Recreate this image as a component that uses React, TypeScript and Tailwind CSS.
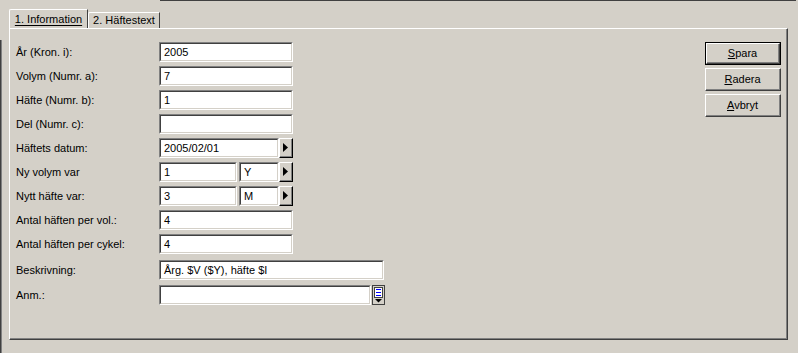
import type { ReactNode } from 'react'

const rows: { label: string; kind: 'text' | 'date' | 'period' | 'wide' | 'memo'; value?: string; unit?: string }[] = [
  { label: 'År (Kron. i):', kind: 'text', value: '2005' },
  { label: 'Volym (Numr. a):', kind: 'text', value: '7' },
  { label: 'Häfte (Numr. b):', kind: 'text', value: '1' },
  { label: 'Del (Numr. c):', kind: 'text', value: '' },
  { label: 'Häftets datum:', kind: 'date', value: '2005/02/01' },
  { label: 'Ny volym var', kind: 'period', value: '1', unit: 'Y' },
  { label: 'Nytt häfte var:', kind: 'period', value: '3', unit: 'M' },
  { label: 'Antal häften per vol.:', kind: 'text', value: '4' },
  { label: 'Antal häften per cykel:', kind: 'text', value: '4' },
  { label: 'Beskrivning:', kind: 'wide', value: 'Årg. $V ($Y), häfte $I' },
  { label: 'Anm.:', kind: 'memo', value: '' },
]

function Field({ value, className }: { value?: string; className: string }) {
  return (
    <div className={`h-[20px] border-t border-l border-t-[#808080] border-l-[#808080] border-b border-r border-b-white border-r-white ${className}`}>
      <div className="flex h-full items-center border-t border-l border-t-[#404040] border-l-[#404040] border-b border-r border-b-[#d4d0c8] border-r-[#d4d0c8] bg-white pl-[3px] pt-[1px]">
        {value}
      </div>
    </div>
  )
}

function ArrowBtn() {
  return (
    <div className="h-[20px] w-[14px] border-r border-b border-r-black border-b-black border-t border-l border-t-white border-l-white">
      <div className="flex h-full items-center justify-center border-r border-b border-r-[#808080] border-b-[#808080] bg-[#d4d0c8]">
        <svg width="5" height="9" viewBox="0 0 5 9">
          <path d="M0 0 L5 4.5 L0 9 Z" fill="#000" />
        </svg>
      </div>
    </div>
  )
}

function ListBtn() {
  return (
    <div className="ml-[1px] h-[20px] w-[13px] border border-[#404040] bg-[#d4d0c8]">
      <svg width="11" height="18" viewBox="0 0 11 18">
        <rect x="1.5" y="1.5" width="8" height="10" fill="#fff" stroke="#404040" />
        <rect x="3" y="3" width="5" height="1" fill="#0000ff" />
        <rect x="3" y="6" width="5" height="1" fill="#0000ff" />
        <rect x="3" y="9" width="5" height="1" fill="#0000ff" />
        <path d="M2 13 L9 13 L5.5 16.5 Z" fill="#000" />
      </svg>
    </div>
  )
}

function Button({ children, isDefault }: { children: ReactNode; isDefault?: boolean }) {
  const inner = (
    <div className="h-full border-t border-l border-t-white border-l-white border-r border-b border-r-[#404040] border-b-[#404040]">
      <div className="flex h-full items-center justify-center border-r border-b border-r-[#808080] border-b-[#808080] pt-[1px]">
        {children}
      </div>
    </div>
  )
  return isDefault ? (
    <div className="h-[23px] w-[76px] border border-black">{inner}</div>
  ) : (
    <div className="h-[23px] w-[76px]">{inner}</div>
  )
}

export default function App() {
  return (
    <div className="relative flex h-[353px] w-[798px] flex-col bg-[#d4d0c8] pl-[9px] pt-[9px] font-['Liberation_Sans',sans-serif] text-[11px] leading-none text-black">
      {/* cut-off window frame edges */}
      <div className="absolute left-0 top-[40px] bottom-0 w-[2px] border-l border-l-[#404040] bg-[#808080]" />
      <div className="absolute left-[160px] right-[2px] top-0 h-[1px] bg-[#404040]" />

      {/* Tabs */}
      <div className="flex h-[19px] items-end">
        <div className="flex h-[19px] w-[79px] items-center justify-center rounded-tl-[2px] border-t border-l border-t-white border-l-white border-r border-r-[#404040] pt-[1px]">
          <span className="underline underline-offset-2">1. Information</span>
        </div>
        <div className="flex h-[16px] w-[72px] items-center justify-center rounded-tl-[2px] border-t border-l border-t-white border-l-white border-r border-r-[#404040]">
          <span>2. Häftestext</span>
        </div>
        <div className="flex-1" />
      </div>

      {/* Panel */}
      <div className="flex h-[312px] w-[779px] border-t border-l border-t-white border-l-white border-r border-b border-r-[#404040] border-b-[#404040]">
        <div className="flex flex-1 justify-between border-r border-b border-r-[#808080] border-b-[#808080] pl-[6px] pr-[5px] pt-[13px]">
          <div className="flex flex-col">
            {rows.map((r, i) => (
              <div key={r.label} className={`flex h-[20px] items-center ${i === 0 ? '' : i === 9 ? 'mt-[6px]' : i === 10 ? 'mt-[5px]' : 'mt-[4px]'}`}>
                <div className="w-[143px] pt-[1px]">{r.label}</div>
                {r.kind === 'text' && <Field value={r.value} className="w-[134px]" />}
                {r.kind === 'date' && (
                  <>
                    <Field value={r.value} className="w-[120px]" />
                    <ArrowBtn />
                  </>
                )}
                {r.kind === 'period' && (
                  <>
                    <Field value={r.value} className="w-[78px]" />
                    <Field value={r.unit} className="ml-[2px] w-[40px]" />
                    <ArrowBtn />
                  </>
                )}
                {r.kind === 'wide' && <Field value={r.value} className="w-[225px]" />}
                {r.kind === 'memo' && (
                  <>
                    <Field value={r.value} className="w-[212px]" />
                    <ListBtn />
                  </>
                )}
              </div>
            ))}
          </div>
          <div className="flex flex-col gap-[3px]">
            <Button isDefault>
              <span><span className="underline">S</span>para</span>
            </Button>
            <Button>
              <span><span className="underline">R</span>adera</span>
            </Button>
            <Button>
              <span><span className="underline">A</span>vbryt</span>
            </Button>
          </div>
        </div>
      </div>
    </div>
  )
}
